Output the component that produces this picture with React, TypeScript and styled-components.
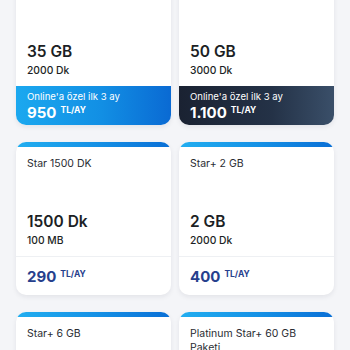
import React from "react";
import styled, { createGlobalStyle } from "styled-components";

const Global = createGlobalStyle`
  html, body { margin: 0; padding: 0; background: #f4f5f8; }
  body { font-family: Inter, "Noto Sans", sans-serif; color: #1f2228; overflow: hidden; }
`;

const Page = styled.div`
  width: 350px;
  height: 350px;
  overflow: hidden;
`;

const Grid = styled.div`
  display: grid;
  grid-template-columns: 155px 155px;
  column-gap: 8px;
  row-gap: 17px;
  padding: 0 16px;
  margin-top: -28px;
`;

const Card = styled.div`
  background: #ffffff;
  border-radius: 10px;
  overflow: hidden;
  box-shadow: 0 2px 5px rgba(20, 30, 50, 0.08);
  display: flex;
  flex-direction: column;
`;

const Strip = styled.div`
  height: 5px;
  background: linear-gradient(90deg, #22aef0 0%, #1592e6 50%, #0a6fd6 100%);
`;

const Body = styled.div`
  padding: 10px 11px 9px;
`;

const Title = styled.div`
  font-size: 10.5px;
  line-height: 14px;
  min-height: 28px;
  color: #2a2d33;
`;

const Main = styled.div`
  margin-top: 27px;
  font-size: 15.5px;
  line-height: 20px;
  font-weight: 600;
  color: #1c1f25;
`;

const Sub = styled.div`
  margin-top: 2px;
  font-size: 10.3px;
  line-height: 13px;
  font-weight: 500;
  color: #1c1f25;
`;

const PriceRow = styled.div`
  border-top: 1px solid #eef0f3;
  padding: 10px 11px 8px;
`;

const Promo = styled.div<{ $dark?: boolean }>`
  padding: 4px 11px 2px;
  color: #ffffff;
  background: ${(p) =>
    p.$dark
      ? "linear-gradient(90deg, #1a2232 0%, #243247 60%, #3a4f69 100%)"
      : "linear-gradient(90deg, #1ba8ef 0%, #128fe4 55%, #0a6ad3 100%)"};
`;

const PromoNote = styled.div`
  font-size: 9.6px;
  line-height: 13px;
  font-weight: 400;
`;

const Price = styled.div<{ $light?: boolean }>`
  display: flex;
  align-items: flex-start;
  gap: 4px;
  font-size: 15px;
  line-height: 20px;
  font-weight: 700;
  color: ${(p) => (p.$light ? "#ffffff" : "#26408d")};
`;

const Unit = styled.span`
  font-size: 8.5px;
  line-height: 12px;
  font-weight: 700;
  margin-top: 1px;
`;

type Plan = {
  title: string;
  main: string;
  sub: string;
  price: string;
  promo?: "blue" | "dark";
};

const plans: Plan[] = [
  { title: "", main: "35 GB", sub: "2000 Dk", price: "950", promo: "blue" },
  { title: "", main: "50 GB", sub: "3000 Dk", price: "1.100", promo: "dark" },
  { title: "Star 1500 DK", main: "1500 Dk", sub: "100 MB", price: "290" },
  { title: "Star+ 2 GB", main: "2 GB", sub: "2000 Dk", price: "400" },
  { title: "Star+ 6 GB", main: "6 GB", sub: "2000 Dk", price: "450" },
  { title: "Platinum Star+ 60 GB Paketi", main: "60 GB", sub: "3000 Dk", price: "1.000" },
];

export default function App() {
  return (
    <Page>
      <Global />
      <Grid>
        {plans.map((p, i) => (
          <Card key={i}>
            <Strip />
            <Body>
              <Title>{p.title}</Title>
              <Main>{p.main}</Main>
              <Sub>{p.sub}</Sub>
            </Body>
            {p.promo ? (
              <Promo $dark={p.promo === "dark"}>
                <PromoNote>Online'a özel ilk 3 ay</PromoNote>
                <Price $light>
                  {p.price}
                  <Unit>TL/AY</Unit>
                </Price>
              </Promo>
            ) : (
              <PriceRow>
                <Price>
                  {p.price}
                  <Unit>TL/AY</Unit>
                </Price>
              </PriceRow>
            )}
          </Card>
        ))}
      </Grid>
    </Page>
  );
}
